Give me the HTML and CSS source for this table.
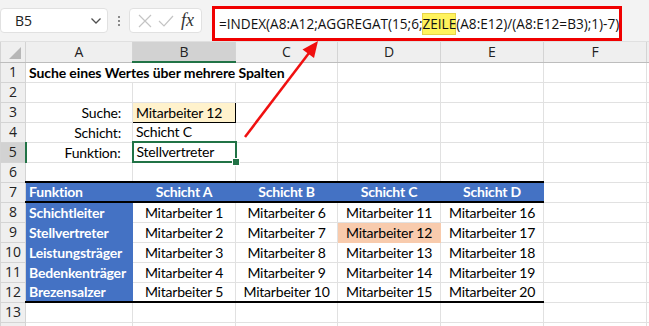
FILE: index.html
```html
<!DOCTYPE html>
<html lang="de">
	<head>
		<meta charset="UTF-8">
		<meta name="viewport" content="width=device-width,initial-scale=1">
		<title>INDEX / AGGREGAT</title>
		<link rel="stylesheet" href="styles.css">
	</head>
	<body>
		<div class="window">
			<header class="toolbar">
				<div class="namebox">
					<span class="namebox__ref">B5</span>
					<svg class="namebox__arrow" width="12" height="8" viewBox="0 0 12 8"><path d="M1.5 1.5 L6 6 L10.5 1.5" fill="none" stroke="#505050" stroke-width="1.3"/></svg>
				</div>
				<div class="grip"><i></i><i></i><i></i></div>
				<div class="fxbox">
					<svg width="14" height="14" viewBox="0 0 14 14"><path d="M1 1 L13 13 M13 1 L1 13" stroke="#c4c4c4" stroke-width="1.2"/></svg>
					<svg width="16" height="14" viewBox="0 0 16 14"><path d="M1 7 L6 12 L15 2" fill="none" stroke="#c4c4c4" stroke-width="1.2"/></svg>
					<span class="fxbox__fx">fx</span>
				</div>
				<div class="formula">=INDEX(A8:A12;AGGREGAT(15;6;<mark class="formula__hl">ZEILE</mark>(A8:E12)/(A8:E12=B3);1)-7)</div>
			</header>

			<table class="sheet">
				<colgroup>
					<col class="col-rh">
					<col class="col-a">
					<col class="col-b">
					<col class="col-c">
					<col class="col-d">
					<col class="col-e">
					<col class="col-f">
					<col class="col-g">
				</colgroup>
				<tr class="colheads">
					<th class="corner"><svg width="14" height="14" viewBox="0 0 14 14"><path d="M13 1 L13 13 L1 13 Z" fill="#b7b7b7"/></svg></th>
					<th>A</th>
					<th class="is-active">B</th>
					<th>C</th>
					<th>D</th>
					<th>E</th>
					<th>F</th>
					<th></th>
				</tr>
				<tr>
					<th class="rh">1</th>
					<td class="title" colspan="3">Suche eines Wertes über mehrere Spalten</td>
					<td></td><td></td><td></td><td></td>
				</tr>
				<tr>
					<th class="rh">2</th>
					<td></td><td></td><td></td><td></td><td></td><td></td><td></td>
				</tr>
				<tr>
					<th class="rh">3</th>
					<td class="label">Suche:</td>
					<td class="input">Mitarbeiter 12</td>
					<td></td><td></td><td></td><td></td><td></td>
				</tr>
				<tr>
					<th class="rh">4</th>
					<td class="label">Schicht:</td>
					<td>Schicht C</td>
					<td></td><td></td><td></td><td></td><td></td>
				</tr>
				<tr>
					<th class="rh is-active">5</th>
					<td class="label">Funktion:</td>
					<td class="selected">Stellvertreter</td>
					<td></td><td></td><td></td><td></td><td></td>
				</tr>
				<tr>
					<th class="rh">6</th>
					<td></td><td></td><td></td><td></td><td></td><td></td><td></td>
				</tr>
				<tr class="head-row">
					<th class="rh">7</th>
					<td class="blue">Funktion</td>
					<td class="blue center">Schicht A</td>
					<td class="blue center">Schicht B</td>
					<td class="blue center">Schicht C</td>
					<td class="blue center">Schicht D</td>
					<td></td><td></td>
				</tr>
				<tr class="data-row">
					<th class="rh">8</th>
					<td class="blue">Schichtleiter</td>
					<td class="center">Mitarbeiter 1</td>
					<td class="center">Mitarbeiter 6</td>
					<td class="center">Mitarbeiter 11</td>
					<td class="center">Mitarbeiter 16</td>
					<td></td><td></td>
				</tr>
				<tr class="data-row">
					<th class="rh">9</th>
					<td class="blue">Stellvertreter</td>
					<td class="center">Mitarbeiter 2</td>
					<td class="center">Mitarbeiter 7</td>
					<td class="center hit">Mitarbeiter 12</td>
					<td class="center">Mitarbeiter 17</td>
					<td></td><td></td>
				</tr>
				<tr class="data-row">
					<th class="rh">10</th>
					<td class="blue">Leistungsträger</td>
					<td class="center">Mitarbeiter 3</td>
					<td class="center">Mitarbeiter 8</td>
					<td class="center">Mitarbeiter 13</td>
					<td class="center">Mitarbeiter 18</td>
					<td></td><td></td>
				</tr>
				<tr class="data-row">
					<th class="rh">11</th>
					<td class="blue">Bedenkenträger</td>
					<td class="center">Mitarbeiter 4</td>
					<td class="center">Mitarbeiter 9</td>
					<td class="center">Mitarbeiter 14</td>
					<td class="center">Mitarbeiter 19</td>
					<td></td><td></td>
				</tr>
				<tr class="data-row last-row">
					<th class="rh">12</th>
					<td class="blue">Brezensalzer</td>
					<td class="center">Mitarbeiter 5</td>
					<td class="center">Mitarbeiter 10</td>
					<td class="center">Mitarbeiter 15</td>
					<td class="center">Mitarbeiter 20</td>
					<td></td><td></td>
				</tr>
				<tr>
					<th class="rh">13</th>
					<td></td><td></td><td></td><td></td><td></td><td></td><td></td>
				</tr>
				<tr>
					<th class="rh"></th>
					<td></td><td></td><td></td><td></td><td></td><td></td><td></td>
				</tr>
			</table>

			<svg class="arrow" width="649" height="326" viewBox="0 0 649 326">
				<line x1="245" y1="137" x2="309" y2="53" stroke="#f01010" stroke-width="2.5"/>
				<polygon points="318,41 314,58 302.5,49.5" fill="#f01010"/>
			</svg>
		</div>
	</body>
</html>
```

FILE: styles.css
```css
body
{
	margin: 0;
	background-color: #fff;
}

.window
{
	position: relative;
	width: 649px;
	height: 326px;
	overflow: hidden;
}

/* formula bar */

.toolbar
{
	height: 42px;
	display: flex;
	align-items: center;
	background-color: #f3f3f3;
	border-bottom: 1px solid #e0e0e0;
	box-sizing: border-box;
	font-family: 'Open Sans', 'Liberation Sans', sans-serif;
}

.namebox
{
	width: 108px;
	height: 25px;
	box-sizing: border-box;
	display: flex;
	align-items: center;
	justify-content: space-between;
	padding: 0 5px 0 14px;
	background-color: #fff;
	border: 1px solid #e1e1e1;
	border-radius: 4px;
	font-size: 14px;
	color: #222;
}

.grip
{
	width: 21px;
	display: flex;
	flex-direction: column;
	align-items: center;
	gap: 2px;
}

.grip i
{
	width: 2px;
	height: 2px;
	background-color: #8a8a8a;
}

.fxbox
{
	width: 73px;
	height: 25px;
	box-sizing: border-box;
	display: flex;
	align-items: center;
	gap: 6px;
	padding-left: 8px;
	background-color: #fff;
	border: 1px solid #e1e1e1;
	border-radius: 4px;
}

.fxbox__fx
{
	font-family: 'Liberation Serif', serif;
	font-style: italic;
	font-size: 18px;
	color: #333;
	margin-left: 1px;
}

.formula
{
	align-self: flex-start;
	margin-top: 6px;
	margin-left: 10px;
	width: 410px;
	height: 35px;
	box-sizing: border-box;
	display: flex;
	align-items: center;
	padding-left: 4px;
	background-color: #fff;
	border: 3px solid #f00000;
	font-size: 13.6px;
	color: #111;
	white-space: nowrap;
}

.formula__hl
{
	display: inline-flex;
	align-items: center;
	height: 22px;
	background-color: #fff35c;
	box-shadow: inset 0 0 0 1px #e6d34a;
	color: #111;
}

/* grid */

.sheet
{
	border-collapse: collapse;
	table-layout: fixed;
	width: 700px;
	font-family: Lato, 'Liberation Sans', sans-serif;
	font-size: 14px;
	letter-spacing: -0.2px;
	color: #000;
}

.col-rh { width: 25px; }
.col-a { width: 107px; }
.col-b { width: 103px; }
.col-c { width: 102px; }
.col-d { width: 103px; }
.col-e { width: 103px; }
.col-f { width: 103px; }
.col-g { width: 54px; }

.sheet tr
{
	height: 20px;
}

.sheet td
{
	padding: 0 3px;
	border: 1px solid #e1e1e1;
	white-space: nowrap;
	overflow: visible;
	vertical-align: bottom;
	line-height: 18px;
}

.sheet th
{
	padding: 0;
	font-family: 'Open Sans', 'Liberation Sans', sans-serif;
	font-weight: normal;
	font-size: 14px;
	letter-spacing: 0;
	color: #222;
	background-color: #efefef;
	border: 1px solid #d4d4d4;
	text-align: center;
	line-height: 18px;
}

.colheads
{
	height: 19px;
}

.colheads th
{
	border-top: none;
	border-bottom: 1px solid #bdbdbd;
}

.colheads th.is-active
{
	background-color: #d2d2d2;
	border-bottom: 2px solid #217346;
}

.corner
{
	text-align: right;
}

.corner svg
{
	display: block;
	margin: 2px 3px 0 auto;
}

.rh
{
	border-left: none;
	border-right: 1px solid #bdbdbd;
}

.sheet th.rh.is-active
{
	background-color: #d2d2d2;
	border-right: 2px solid #217346;
}

.sheet td.title
{
	font-weight: bold;
	letter-spacing: -0.1px;
}

.sheet td.label
{
	text-align: right;
	padding-right: 11px;
}

.sheet td.input
{
	background-color: #fff2cc;
	border: 1px solid #000;
}

.sheet td.selected
{
	position: relative;
	border: 2px solid #217346;
}

.selected::after
{
	content: '';
	position: absolute;
	right: -5px;
	bottom: -5px;
	width: 6px;
	height: 6px;
	background-color: #217346;
	border: 1px solid #fff;
}

.sheet td.blue
{
	background-color: #4472c4;
	border-color: #4472c4;
	color: #fff;
	font-weight: bold;
}

.center
{
	text-align: center;
}

.sheet td.hit
{
	background-color: #f8cbad;
	border-color: #f8cbad;
}

.head-row
{
	height: 22px;
}

.sheet .head-row td.blue
{
	border-top: 2px solid #000;
	border-bottom: 2px solid #000;
}

.sheet .last-row td:nth-child(-n+6)
{
	border-bottom: 2px solid #000;
}

.arrow
{
	position: absolute;
	top: 0;
	left: 0;
	pointer-events: none;
}
```
